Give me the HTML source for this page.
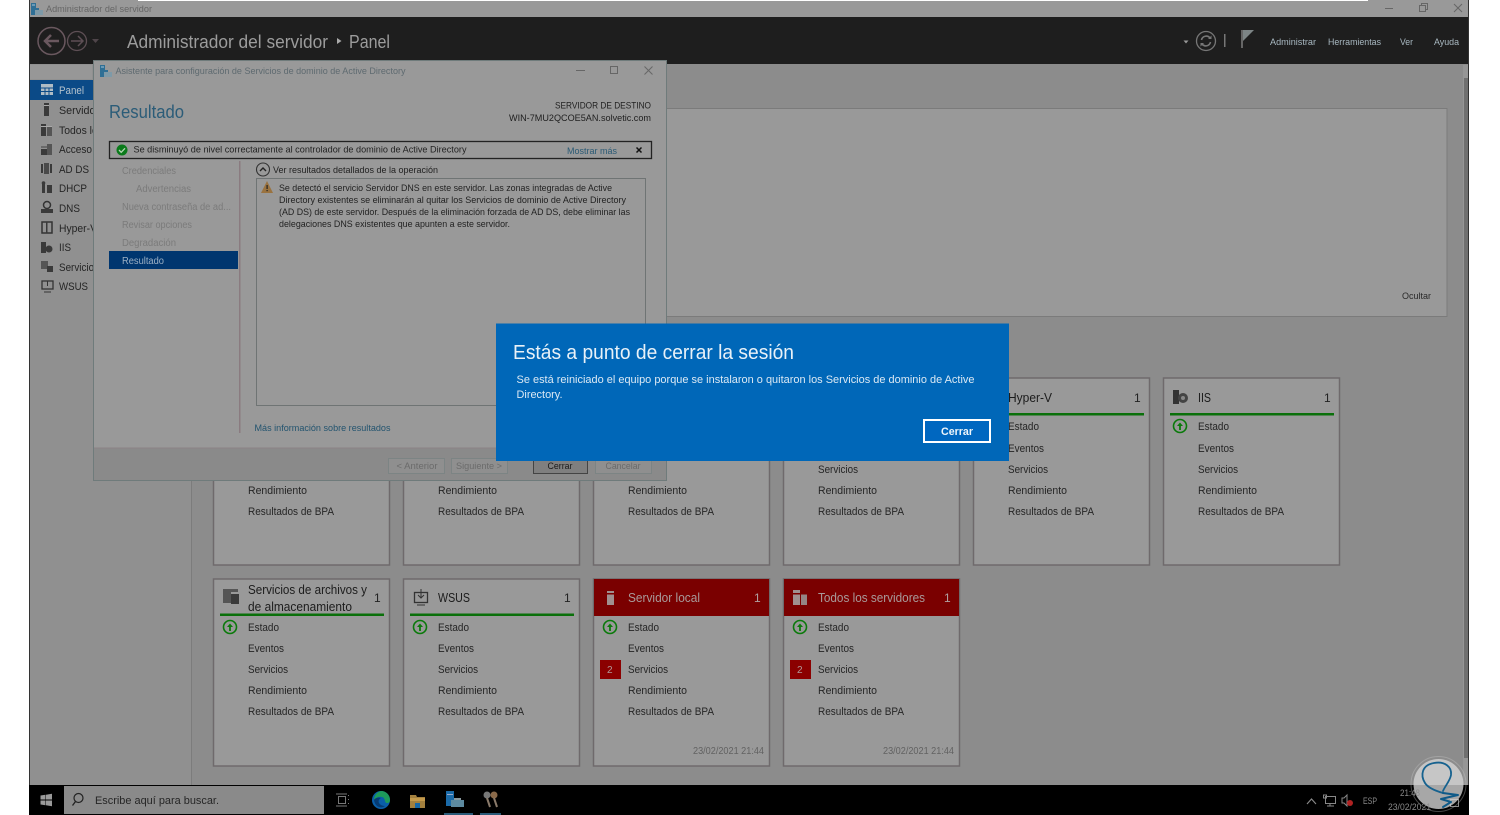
<!DOCTYPE html>
<html lang="es"><head><meta charset="utf-8"><title>Administrador del servidor</title>
<style>
html,body{margin:0;padding:0;width:1500px;height:815px;overflow:hidden;background:#fff}
svg{display:block;filter:blur(.35px)}
text{font-family:"Liberation Sans",sans-serif;white-space:pre}
.c{font-size:11px;fill:#252525}
.t{font-size:13px;fill:#1c1c1c}
.n{font-size:12px;fill:#222}
.st{font-size:10px;fill:#7b7b7b}
.d{font-size:9.5px;fill:#222}
.h{font-size:9.5px;fill:#a9b9c2}
</style></head><body>
<svg width="1500" height="815" viewBox="0 0 1500 815" xmlns="http://www.w3.org/2000/svg">
<defs>
<g id="ok"><circle r="6.5" fill="none" stroke="#0a7a0a" stroke-width="1.600"/><path d="M0 4V0" stroke="#0a7a0a" stroke-width="1.800"/><path d="M-3 0L0-3.500L3 0Z" fill="#0a7a0a"/></g>
<g id="logo"><path d="M0 0h5v5h3v2h3v5H0z" fill="#2f6f95"/><rect x="1" y="1.500" width="3" height="1" fill="#a9c5d5"/><rect x="4" y="7" width="8" height="5" fill="#7e9aa8"/></g>
</defs>
<rect width="1500" height="815" fill="#fff"/>
<rect x="29" y="0" width="1440" height="815" fill="#8c8c8c"/>
<rect x="138" y="0" width="1230" height="1.500" fill="#fff"/>
<rect x="29" y="0" width="109" height="1" fill="#999"/><rect x="1368" y="0" width="101" height="1" fill="#999"/>
<rect x="30" y="1" width="1438" height="16" fill="#999"/>
<rect x="29" y="17" width="1440" height="47" fill="#1e1e1e"/>
<rect x="29" y="0" width="1" height="785" fill="#333"/><rect x="1468" y="0" width="1" height="785" fill="#333"/>
<use href="#logo" x="31" y="3"/>
<text x="46" y="12" font-size="9.500" fill="#666" textLength="106" lengthAdjust="spacingAndGlyphs">Administrador del servidor</text>
<path d="M1385 8.500h8" stroke="#666"/><rect x="1419.500" y="5.500" width="6" height="6" fill="none" stroke="#666"/><path d="M1421.500 5.500v-2h6v6h-2" fill="none" stroke="#666"/>
<path d="M1454 4l8 8m0-8l-8 8" stroke="#666"/>

<!-- header -->
<circle cx="51.500" cy="41" r="13.500" fill="none" stroke="#6a585f" stroke-width="1.500"/>
<path d="M59 41H45M51 35l-6 6 6 6" fill="none" stroke="#6a585f" stroke-width="2.500"/>
<circle cx="77" cy="41" r="9.500" fill="none" stroke="#5e4f55" stroke-width="1.300"/>
<path d="M71 41h11M78 36l5 5-5 5" fill="none" stroke="#5e4f55" stroke-width="1.500"/>
<path d="M92 39h7l-3.500 4z" fill="#4f454a"/>
<text x="127" y="48" font-size="18" fill="#9c9c9c" textLength="201" lengthAdjust="spacingAndGlyphs">Administrador del servidor</text>
<path d="M337 38l4.500 3-4.500 3z" fill="#aaa"/>
<text x="349" y="48" font-size="18" fill="#9c9c9c" textLength="41" lengthAdjust="spacingAndGlyphs">Panel</text>
<path d="M1183.500 40.500h5l-2.500 3z" fill="#999"/>
<circle cx="1206" cy="41" r="9.500" fill="none" stroke="#777" stroke-width="1.300"/>
<path d="M1201.500 40a4.800 4.800 0 0 1 8.500-2M1210.500 42a4.800 4.800 0 0 1-8.500 2" fill="none" stroke="#777" stroke-width="1.600"/>
<path d="M1208 39h3.500v-3.500zM1204 43h-3.500v3.500z" fill="#777"/>
<rect x="1224" y="34" width="1.500" height="13" fill="#777"/>
<rect x="1241" y="30" width="2" height="18" fill="#666"/><path d="M1243 30h11l-11 11z" fill="#7d8586"/>
<text class="h" x="1270" y="45" textLength="46" lengthAdjust="spacingAndGlyphs">Administrar</text>
<text class="h" x="1328" y="45" textLength="53" lengthAdjust="spacingAndGlyphs">Herramientas</text>
<text class="h" x="1400" y="45" textLength="13" lengthAdjust="spacingAndGlyphs">Ver</text>
<text class="h" x="1434" y="45" textLength="25" lengthAdjust="spacingAndGlyphs">Ayuda</text>

<!-- sidebar -->
<rect x="30" y="64" width="161" height="721" fill="#909090"/>
<rect x="191" y="64" width="1" height="721" fill="#7c7c7c"/>
<rect x="30" y="65" width="62" height="14" fill="#979797"/>
<rect x="30" y="80" width="63" height="20" fill="#0b4a87"/>
<g fill="#3a3a3a">
<rect x="41" y="84" width="12" height="11" fill="#b0bcc5"/><path d="M41 88h12M41 91.500h12M45 88v7M49 88v7" stroke="#0b4a87"/>
<rect x="44" y="103" width="5" height="13"/><rect x="44" y="105" width="5" height="1" fill="#aaa"/>
<rect x="41" y="124" width="5" height="12"/><rect x="47" y="127" width="5" height="9" fill="#555"/><rect x="41" y="126" width="11" height="1" fill="#aaa"/>
<rect x="41" y="149" width="6" height="6"/><rect x="47" y="144" width="5" height="11" fill="#555"/><path d="M41 147h6" stroke="#444"/>
<rect x="41" y="164" width="2" height="9"/><rect x="44" y="163" width="5" height="11" fill="#4a4a4a"/><rect x="50" y="164" width="2" height="9"/>
<rect x="42" y="183" width="3" height="10"/><rect x="47" y="185" width="5" height="8"/><circle cx="43.500" cy="183" r="1.800"/>
<circle cx="47" cy="205" r="3.500" fill="none" stroke="#333" stroke-width="1.500"/><rect x="41" y="209" width="12" height="4"/>
<rect x="42" y="222" width="10" height="11" fill="none" stroke="#333" stroke-width="1.500"/><rect x="46" y="222" width="1.500" height="11"/>
<rect x="41" y="242" width="5" height="11"/><circle cx="49" cy="249" r="3.500"/>
<rect x="41" y="261" width="7" height="8" fill="#555"/><rect x="47" y="266" width="6" height="6"/>
<rect x="42" y="281" width="11" height="8" fill="none" stroke="#333" stroke-width="1.300"/><path d="M47.500 281v5M44 292h7" stroke="#333"/>
</g>
<text x="59" y="94" font-size="11" fill="#b5c3cd" textLength="25" lengthAdjust="spacingAndGlyphs">Panel</text>
<text class="c" x="59" y="114" textLength="40" lengthAdjust="spacingAndGlyphs">Servidor</text><text class="c" x="59" y="134" textLength="44" lengthAdjust="spacingAndGlyphs">Todos los</text><text class="c" x="59" y="153" textLength="33" lengthAdjust="spacingAndGlyphs">Acceso</text><text class="c" x="59" y="173" textLength="30" lengthAdjust="spacingAndGlyphs">AD DS</text><text class="c" x="59" y="192" textLength="28" lengthAdjust="spacingAndGlyphs">DHCP</text><text class="c" x="59" y="212" textLength="21" lengthAdjust="spacingAndGlyphs">DNS</text><text class="c" x="59" y="232" textLength="38" lengthAdjust="spacingAndGlyphs">Hyper-V</text><text class="c" x="59" y="251" textLength="12" lengthAdjust="spacingAndGlyphs">IIS</text><text class="c" x="59" y="271" textLength="40" lengthAdjust="spacingAndGlyphs">Servicios</text><text class="c" x="59" y="290" textLength="29" lengthAdjust="spacingAndGlyphs">WSUS</text>

<!-- scrollbar -->
<rect x="1463" y="65" width="5" height="720" fill="#969696"/><rect x="1464" y="78" width="4" height="680" fill="#707070"/>

<!-- welcome box -->
<rect x="200" y="108.500" width="1247" height="208" fill="#999" stroke="#7b7b7b"/>
<text x="1402" y="299" font-size="9.500" fill="#2a2a2a" textLength="29" lengthAdjust="spacingAndGlyphs">Ocultar</text>

<!-- cards -->
<g fill="#999" stroke="#6f6a6c" stroke-width="1.500">
<rect x="213.500" y="378" width="176" height="187"/><rect x="403.500" y="378" width="176" height="187"/><rect x="593.500" y="378" width="176" height="187"/><rect x="783.500" y="378" width="176" height="187"/><rect x="973.500" y="378" width="176" height="187"/><rect x="1163.500" y="378" width="176" height="187"/>
<rect x="213.500" y="579" width="176" height="187"/><rect x="403.500" y="579" width="176" height="187"/><rect x="593.500" y="579" width="176" height="187"/><rect x="783.500" y="579" width="176" height="187"/>
</g>
<!-- Hyper-V -->
<text class="t" x="1008" y="402" textLength="44" lengthAdjust="spacingAndGlyphs">Hyper-V</text><text class="n" x="1134" y="402">1</text>
<rect x="980" y="413" width="164" height="2.500" fill="#0a700a"/>
<text class="c" x="1008" y="430" textLength="31" lengthAdjust="spacingAndGlyphs">Estado</text><text class="c" x="1008" y="452" textLength="36" lengthAdjust="spacingAndGlyphs">Eventos</text><text class="c" x="1008" y="473" textLength="40" lengthAdjust="spacingAndGlyphs">Servicios</text><text class="c" x="1008" y="494" textLength="59" lengthAdjust="spacingAndGlyphs">Rendimiento</text><text class="c" x="1008" y="515" textLength="86" lengthAdjust="spacingAndGlyphs">Resultados de BPA</text>
<!-- IIS -->
<rect x="1173" y="390" width="6" height="14" fill="#333"/><circle cx="1183" cy="398" r="5" fill="#444"/><circle cx="1183" cy="398" r="2" fill="#888"/>
<text class="t" x="1198" y="402" textLength="13" lengthAdjust="spacingAndGlyphs">IIS</text><text class="n" x="1324" y="402">1</text>
<rect x="1170" y="413" width="164" height="2.500" fill="#0a700a"/>
<use href="#ok" x="1180" y="426"/>
<text class="c" x="1198" y="430" textLength="31" lengthAdjust="spacingAndGlyphs">Estado</text><text class="c" x="1198" y="452" textLength="36" lengthAdjust="spacingAndGlyphs">Eventos</text><text class="c" x="1198" y="473" textLength="40" lengthAdjust="spacingAndGlyphs">Servicios</text><text class="c" x="1198" y="494" textLength="59" lengthAdjust="spacingAndGlyphs">Rendimiento</text><text class="c" x="1198" y="515" textLength="86" lengthAdjust="spacingAndGlyphs">Resultados de BPA</text>
<!-- Row 1 visible texts -->
<text class="c" x="248" y="494" textLength="59" lengthAdjust="spacingAndGlyphs">Rendimiento</text><text class="c" x="248" y="515" textLength="86" lengthAdjust="spacingAndGlyphs">Resultados de BPA</text>
<text class="c" x="438" y="494" textLength="59" lengthAdjust="spacingAndGlyphs">Rendimiento</text><text class="c" x="438" y="515" textLength="86" lengthAdjust="spacingAndGlyphs">Resultados de BPA</text>
<text class="c" x="628" y="494" textLength="59" lengthAdjust="spacingAndGlyphs">Rendimiento</text><text class="c" x="628" y="515" textLength="86" lengthAdjust="spacingAndGlyphs">Resultados de BPA</text>
<text class="c" x="818" y="473" textLength="40" lengthAdjust="spacingAndGlyphs">Servicios</text>
<text class="c" x="818" y="494" textLength="59" lengthAdjust="spacingAndGlyphs">Rendimiento</text><text class="c" x="818" y="515" textLength="86" lengthAdjust="spacingAndGlyphs">Resultados de BPA</text>
<!-- File services -->
<rect x="223" y="591" width="8" height="12" fill="#555"/><rect x="223" y="589" width="15" height="3" fill="#555"/><rect x="231" y="594" width="8" height="10" fill="#3a3a3a"/>
<text class="t" x="248" y="594" textLength="119" lengthAdjust="spacingAndGlyphs">Servicios de archivos y</text>
<text class="t" x="248" y="611" textLength="104" lengthAdjust="spacingAndGlyphs">de almacenamiento</text><text class="n" x="374" y="602">1</text>
<rect x="220" y="613.500" width="164" height="2.500" fill="#0a700a"/>
<use href="#ok" x="230" y="627"/>
<text class="c" x="248" y="631" textLength="31" lengthAdjust="spacingAndGlyphs">Estado</text><text class="c" x="248" y="652" textLength="36" lengthAdjust="spacingAndGlyphs">Eventos</text><text class="c" x="248" y="673" textLength="40" lengthAdjust="spacingAndGlyphs">Servicios</text><text class="c" x="248" y="694" textLength="59" lengthAdjust="spacingAndGlyphs">Rendimiento</text><text class="c" x="248" y="715" textLength="86" lengthAdjust="spacingAndGlyphs">Resultados de BPA</text>
<!-- WSUS -->
<rect x="414.500" y="592.500" width="13" height="10" fill="none" stroke="#333" stroke-width="1.300"/><path d="M421 589v9M418 595l3 3 3-3M417 605h8" stroke="#333" fill="none"/>
<text class="t" x="438" y="602" textLength="32" lengthAdjust="spacingAndGlyphs">WSUS</text><text class="n" x="564" y="602">1</text>
<rect x="410" y="613.500" width="164" height="2.500" fill="#0a700a"/>
<use href="#ok" x="420" y="627"/>
<text class="c" x="438" y="631" textLength="31" lengthAdjust="spacingAndGlyphs">Estado</text><text class="c" x="438" y="652" textLength="36" lengthAdjust="spacingAndGlyphs">Eventos</text><text class="c" x="438" y="673" textLength="40" lengthAdjust="spacingAndGlyphs">Servicios</text><text class="c" x="438" y="694" textLength="59" lengthAdjust="spacingAndGlyphs">Rendimiento</text><text class="c" x="438" y="715" textLength="86" lengthAdjust="spacingAndGlyphs">Resultados de BPA</text>
<!-- Local server -->
<rect x="594" y="579" width="175" height="37" fill="#7a0000"/>
<rect x="607" y="591" width="7" height="14" fill="#a09090"/><rect x="607" y="593" width="7" height="1.500" fill="#7a0000"/>
<text x="628" y="602" font-size="13" fill="#a99a9a" textLength="72" lengthAdjust="spacingAndGlyphs">Servidor local</text><text x="754" y="602" font-size="12" fill="#b0a0a0">1</text>
<use href="#ok" x="610" y="627"/>
<rect x="600" y="660" width="21" height="19" fill="#8b0000"/><text x="607" y="673" font-size="10" fill="#b09a9a">2</text>
<text class="c" x="628" y="631" textLength="31" lengthAdjust="spacingAndGlyphs">Estado</text><text class="c" x="628" y="652" textLength="36" lengthAdjust="spacingAndGlyphs">Eventos</text><text class="c" x="628" y="673" textLength="40" lengthAdjust="spacingAndGlyphs">Servicios</text><text class="c" x="628" y="694" textLength="59" lengthAdjust="spacingAndGlyphs">Rendimiento</text><text class="c" x="628" y="715" textLength="86" lengthAdjust="spacingAndGlyphs">Resultados de BPA</text>
<text x="693" y="754" font-size="10" fill="#626262" textLength="71" lengthAdjust="spacingAndGlyphs">23/02/2021 21:44</text>
<!-- All servers -->
<rect x="784" y="579" width="175" height="37" fill="#7a0000"/>
<rect x="793" y="590" width="7" height="15" fill="#a09090"/><rect x="801" y="594" width="6" height="11" fill="#958585"/><rect x="793" y="593" width="14" height="1.500" fill="#7a0000"/>
<text x="818" y="602" font-size="13" fill="#a99a9a" textLength="107" lengthAdjust="spacingAndGlyphs">Todos los servidores</text><text x="944" y="602" font-size="12" fill="#b0a0a0">1</text>
<use href="#ok" x="800" y="627"/>
<rect x="790" y="660" width="21" height="19" fill="#8b0000"/><text x="797" y="673" font-size="10" fill="#b09a9a">2</text>
<text class="c" x="818" y="631" textLength="31" lengthAdjust="spacingAndGlyphs">Estado</text><text class="c" x="818" y="652" textLength="36" lengthAdjust="spacingAndGlyphs">Eventos</text><text class="c" x="818" y="673" textLength="40" lengthAdjust="spacingAndGlyphs">Servicios</text><text class="c" x="818" y="694" textLength="59" lengthAdjust="spacingAndGlyphs">Rendimiento</text><text class="c" x="818" y="715" textLength="86" lengthAdjust="spacingAndGlyphs">Resultados de BPA</text>
<text x="883" y="754" font-size="10" fill="#626262" textLength="71" lengthAdjust="spacingAndGlyphs">23/02/2021 21:44</text>

<!-- wizard dialog -->
<rect x="93.500" y="60.500" width="573" height="420" fill="#999" stroke="#6f7b7b"/>
<rect x="94" y="448" width="572" height="32" fill="#8a8a8a"/><rect x="94" y="447.500" width="572" height="1" fill="#8c8285"/>
<use href="#logo" x="100" y="65"/>
<text x="115.500" y="74" font-size="9.500" fill="#5e6a70" textLength="290" lengthAdjust="spacingAndGlyphs">Asistente para configuración de Servicios de dominio de Active Directory</text>
<path d="M576 70.500h9" stroke="#666"/><rect x="610.500" y="66.500" width="7" height="7" fill="none" stroke="#666"/><path d="M644.500 66.500l8 8m0-8l-8 8" stroke="#666"/>
<text x="109" y="118" font-size="18" fill="#2b5c78" textLength="75" lengthAdjust="spacingAndGlyphs">Resultado</text>
<text x="555" y="108.500" font-size="9.500" fill="#1f1f1f" textLength="96" lengthAdjust="spacingAndGlyphs">SERVIDOR DE DESTINO</text>
<text x="509" y="121" font-size="9.500" fill="#1f1f1f" textLength="142" lengthAdjust="spacingAndGlyphs">WIN-7MU2QCOE5AN.solvetic.com</text>
<rect x="109.500" y="141.500" width="542" height="17" fill="none" stroke="#222" stroke-width="1.300"/>
<circle cx="122" cy="150" r="5.500" fill="#0a7a1a"/><path d="M119 150l2.200 2.300 3.800-4" stroke="#b5d5b5" stroke-width="1.300" fill="none"/>
<text class="d" x="133.500" y="152.500" textLength="333" lengthAdjust="spacingAndGlyphs">Se disminuyó de nivel correctamente al controlador de dominio de Active Directory</text>
<text x="567" y="154" font-size="9.500" fill="#2a5a75" textLength="50" lengthAdjust="spacingAndGlyphs">Mostrar más</text>
<path d="M636.500 147.500l5 5m0-5l-5 5" stroke="#111" stroke-width="1.500"/>
<rect x="239" y="161" width="1.500" height="272" fill="#8a7b80"/>
<text class="st" x="122" y="174" textLength="54" lengthAdjust="spacingAndGlyphs">Credenciales</text>
<text class="st" x="136" y="192" textLength="55" lengthAdjust="spacingAndGlyphs">Advertencias</text>
<text class="st" x="122" y="210" textLength="109" lengthAdjust="spacingAndGlyphs">Nueva contraseña de ad...</text>
<text class="st" x="122" y="228" textLength="70" lengthAdjust="spacingAndGlyphs">Revisar opciones</text>
<text class="st" x="122" y="246" textLength="54" lengthAdjust="spacingAndGlyphs">Degradación</text>
<rect x="109" y="251" width="129" height="18" fill="#00366f"/>
<text x="122" y="264" font-size="10" fill="#9cb0c4" textLength="42" lengthAdjust="spacingAndGlyphs">Resultado</text>
<circle cx="263" cy="169.500" r="6.500" fill="none" stroke="#333" stroke-width="1.100"/><path d="M260 171l3-3 3 3" fill="none" stroke="#222" stroke-width="1.400"/>
<text class="d" x="273" y="173" textLength="165" lengthAdjust="spacingAndGlyphs">Ver resultados detallados de la operación</text>
<rect x="256.500" y="178.500" width="389" height="227" fill="none" stroke="#6f7474"/>
<path d="M267 181l6 12h-12z" fill="#9a7340"/><rect x="266.500" y="185" width="1.200" height="4" fill="#222"/><rect x="266.500" y="190" width="1.200" height="1.200" fill="#222"/>
<text class="d" x="279" y="191" textLength="333" lengthAdjust="spacingAndGlyphs">Se detectó el servicio Servidor DNS en este servidor. Las zonas integradas de Active</text>
<text class="d" x="279" y="203" textLength="347" lengthAdjust="spacingAndGlyphs">Directory existentes se eliminarán al quitar los Servicios de dominio de Active Directory</text>
<text class="d" x="279" y="215" textLength="351" lengthAdjust="spacingAndGlyphs">(AD DS) de este servidor. Después de la eliminación forzada de AD DS, debe eliminar las</text>
<text class="d" x="279" y="227" textLength="231" lengthAdjust="spacingAndGlyphs">delegaciones DNS existentes que apunten a este servidor.</text>
<text x="254.500" y="431" font-size="9.500" fill="#23546f" textLength="136" lengthAdjust="spacingAndGlyphs">Más información sobre resultados</text>
<g fill="#8f8f8f" stroke="#7c8484">
<rect x="388.500" y="458.500" width="56" height="15"/><rect x="451.500" y="458.500" width="56" height="15"/><rect x="595.500" y="458.500" width="56" height="15"/>
</g>
<rect x="533.500" y="458.500" width="54" height="15" fill="#7f7f7f" stroke="#444"/>
<text x="396.500" y="469" font-size="9.500" fill="#6b6b6b" textLength="41" lengthAdjust="spacingAndGlyphs">&lt; Anterior</text>
<text x="456" y="469" font-size="9.500" fill="#6b6b6b" textLength="46" lengthAdjust="spacingAndGlyphs">Siguiente &gt;</text>
<text x="547.500" y="469" font-size="9.500" fill="#1a1a1a" textLength="25" lengthAdjust="spacingAndGlyphs">Cerrar</text>
<text x="605.500" y="469" font-size="9.500" fill="#6b6b6b" textLength="35" lengthAdjust="spacingAndGlyphs">Cancelar</text>

<!-- blue shutdown dialog -->
<rect x="496" y="323.500" width="513" height="137.500" fill="#0067b8"/>
<text x="513" y="359" font-size="20" fill="#e8f1f8" textLength="281" lengthAdjust="spacingAndGlyphs">Estás a punto de cerrar la sesión</text>
<text x="516.500" y="383" font-size="11" fill="#dbe9f4" textLength="458" lengthAdjust="spacingAndGlyphs">Se está reiniciado el equipo porque se instalaron o quitaron los Servicios de dominio de Active</text>
<text x="516.500" y="398" font-size="11" fill="#dbe9f4" textLength="46" lengthAdjust="spacingAndGlyphs">Directory.</text>
<rect x="924" y="420" width="66" height="22" fill="#0067c0" stroke="#fff" stroke-width="2"/>
<text x="941" y="435" font-size="11" font-weight="700" fill="#eef5fb" textLength="32" lengthAdjust="spacingAndGlyphs">Cerrar</text>

<!-- taskbar -->
<rect x="29" y="785" width="1440" height="30" fill="#000"/>
<path d="M40.500 795.500l5-.7v4.700h-5zM46 794.700l6-.9v5.700h-6zM40.500 800.500h5v4.700l-5-.7zM46 800.500h6v5.700l-6-.9z" fill="#9a9a9a"/>
<rect x="64" y="786" width="260" height="28" fill="#8a8a8a"/>
<circle cx="78.500" cy="798" r="4.500" fill="none" stroke="#222" stroke-width="1.200"/><path d="M75.500 801.500l-3 4" stroke="#222" stroke-width="1.300"/>
<text x="95" y="804" font-size="11" fill="#262626" textLength="124" lengthAdjust="spacingAndGlyphs">Escribe aquí para buscar.</text>
<rect x="338.500" y="796.500" width="7" height="7" fill="none" stroke="#777"/><path d="M336 794h11M336 806h11M348.500 795v1M348.500 799v1M348.500 803v1" stroke="#777"/>
<circle cx="381" cy="800" r="9" fill="#0a5ea8"/><path d="M381 791a9 9 0 0 1 9 9c0 2-1 3-3 3-3 0-1-5-5-6-3-1-7 1-8 3a9 9 0 0 1 7-9z" fill="#1d9a5a"/><path d="M374 800c1-2 5-3 7-2-2 1-3 3-2 5 1 2 4 3 6 3-4 3-10 1-11-6z" fill="#063b73"/>
<path d="M410 795h6l1 2h8v11h-15z" fill="#a3803e"/><rect x="410" y="798" width="15" height="3" fill="#c49a4c"/><rect x="415" y="803" width="5" height="5" fill="#1668a8"/>
<rect x="446" y="791" width="8" height="15" fill="#1a6aa8"/><rect x="447" y="794" width="6" height="1" fill="#9ac"/><rect x="451" y="800" width="13" height="7" fill="#5d8aa0"/><rect x="454" y="798" width="7" height="2" fill="#8a9aa0"/>
<rect x="444" y="813" width="29" height="2" fill="#2a5a78"/><rect x="480" y="813" width="21" height="2" fill="#2a5a78"/>
<circle cx="487" cy="795" r="3.500" fill="#777"/><circle cx="494" cy="795" r="3.500" fill="#8a6a4a"/><path d="M487 798l3 9M494 798l3 9" stroke="#8a7a6a" stroke-width="2"/>
<path d="M1307 804l4.500-5 4.500 5" fill="none" stroke="#8a8a8a" stroke-width="1.100"/>
<rect x="1325.500" y="796.500" width="10" height="7" fill="none" stroke="#888"/><path d="M1330 804v2M1327 806h7M1323.500 795h3v3h-3z" stroke="#888" fill="none"/>
<path d="M1342 798v5h2l3 3v-11l-3 3z" fill="none" stroke="#888"/><circle cx="1350" cy="803" r="3" fill="#b02222"/>
<text x="1363" y="804" font-size="9" fill="#8a8a8a" textLength="14" lengthAdjust="spacingAndGlyphs">ESP</text>
<text x="1450.500" y="810" font-size="1" fill="#000"> </text>
<rect x="1450.500" y="799.500" width="8" height="7" fill="none" stroke="#888"/>

<!-- watermark -->
<circle cx="1438.500" cy="784" r="25" fill="#d6d6d6" fill-opacity=".78"/>
<circle cx="1438.500" cy="784" r="27.500" fill="none" stroke="#ccc" stroke-opacity=".35"/>
<path d="M1443 793C1436 791 1428 788 1425 783C1420 775 1422 765 1434 763C1445 761 1452 767 1451 775C1450 781 1445 786 1443 791" fill="none" stroke="#16628f" stroke-width="1.800" stroke-linecap="round"/>
<path d="M1443 793L1458 795L1441 799L1451 802L1443 807" fill="none" stroke="#0f5a88" stroke-width="2" stroke-linejoin="round" stroke-linecap="round"/>
<text x="1400" y="796" font-size="9" fill="#8a8a8a" textLength="20" lengthAdjust="spacingAndGlyphs">21:48</text>
<text x="1388" y="810" font-size="9" fill="#8a8a8a" textLength="43" lengthAdjust="spacingAndGlyphs">23/02/2021</text>
</svg>
</body></html>
